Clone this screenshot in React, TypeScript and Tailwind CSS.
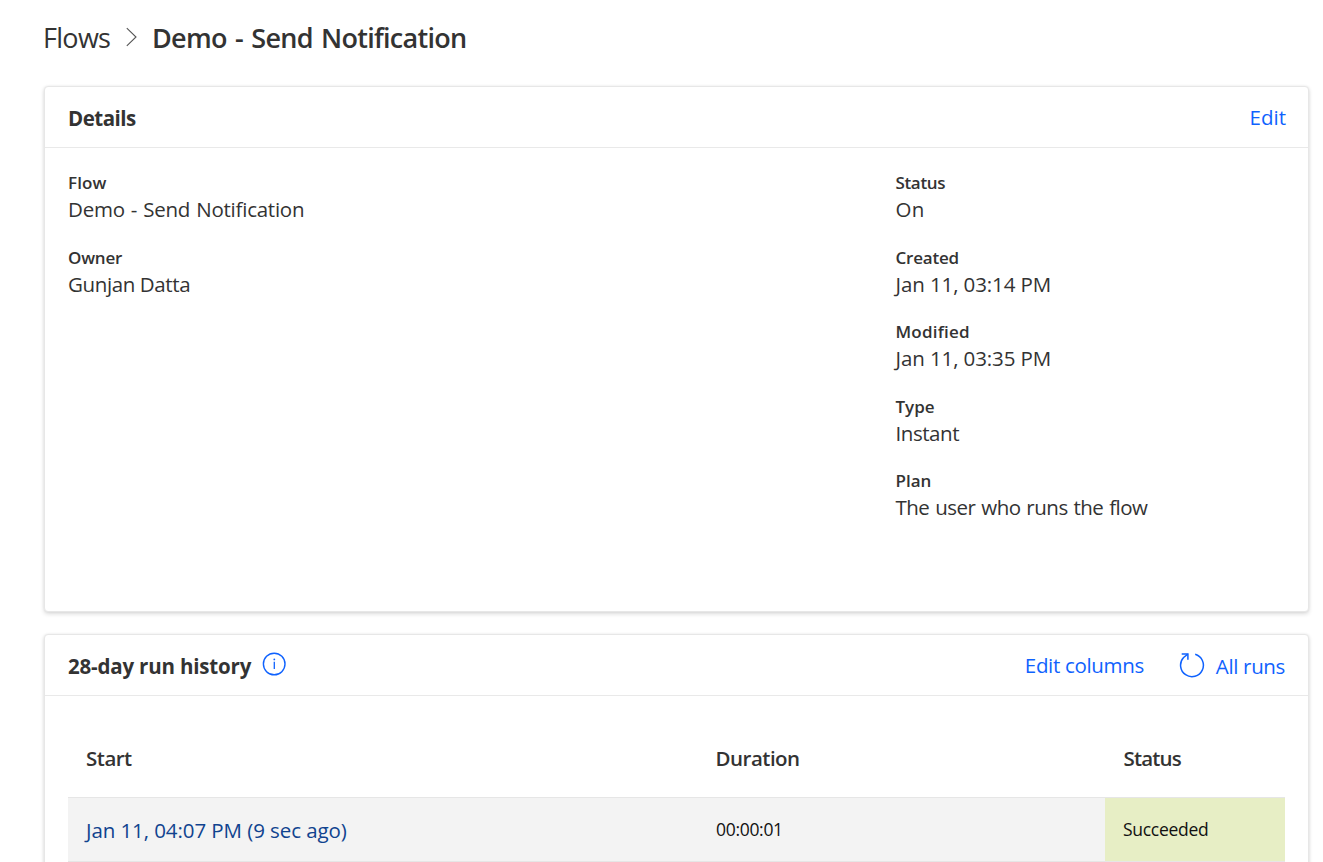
import React from "react";

type Item = { label: string; value: string; labelClass: string; valueClass: string; gap: string };

const summary: Item[] = [
  { label: "Flow", value: "Demo - Send Notification", labelClass: "tracking-[0.1px]", valueClass: "tracking-[-0.24px] [word-spacing:1px]", gap: "mb-[21px]" },
  { label: "Owner", value: "Gunjan Datta", labelClass: "tracking-[-0.2px]", valueClass: "tracking-[-0.38px]", gap: "" },
];

const properties: Item[] = [
  { label: "Status", value: "On", labelClass: "tracking-[-0.35px]", valueClass: "tracking-[0.3px]", gap: "mb-[21px]" },
  { label: "Created", value: "Jan 11, 03:14 PM", labelClass: "tracking-[-0.2px]", valueClass: "tracking-[-0.1px]", gap: "mb-5" },
  { label: "Modified", value: "Jan 11, 03:35 PM", labelClass: "tracking-[0.2px]", valueClass: "tracking-[-0.1px]", gap: "mb-[21px]" },
  { label: "Type", value: "Instant", labelClass: "", valueClass: "tracking-[-0.45px]", gap: "mb-5" },
  { label: "Plan", value: "The user who runs the flow", labelClass: "", valueClass: "tracking-[-0.5px] [word-spacing:1px]", gap: "" },
];

const card = "rounded-[4px] border border-[#e7e7e7] bg-white shadow-[0_2px_4px_rgba(0,0,0,0.14),0_0_3px_rgba(0,0,0,0.06)]";

function Field({ item }: { item: Item }) {
  return (
    <div className={item.gap}>
      <dt className={`pt-px text-[17px] leading-6 font-semibold ${item.labelClass}`}>{item.label}</dt>
      <dd className={`text-[20.5px] leading-7 ${item.valueClass}`}>{item.value}</dd>
      <div className="h-px" />
    </div>
  );
}

function Chevron() {
  return (
    <svg className="ml-[16px] h-5 w-[11px]" viewBox="0 0 11 20" fill="none" stroke="#555" strokeWidth="1.1">
      <path d="M0.8 1.2 L10 10 L0.8 18.8" />
    </svg>
  );
}

function InfoIcon() {
  return (
    <svg className="-mt-0.5 h-6 w-6" viewBox="0 0 24 24" fill="none" stroke="#0f62fe" strokeWidth="1.4">
      <circle cx="12.2" cy="12" r="10.8" />
      <path d="M12.3 9.8V17" strokeWidth="1.3" />
      <circle cx="12.3" cy="7.4" r="0.9" fill="#0f62fe" stroke="none" />
    </svg>
  );
}

function RefreshIcon() {
  return (
    <svg className="h-[26px] w-[26px]" viewBox="0 0 26 26" fill="none" stroke="#0f62fe" strokeWidth="1.5">
      <path d="M16.2 2.3A11.4 11.4 0 1 1 4.6 5.5L8.8 2.2" />
      <path d="M2.7 2H8.9V7.8" />
    </svg>
  );
}

export default function App() {
  return (
    <main className="h-[862px] overflow-hidden bg-white pl-11 pr-3.5 font-['Open_Sans','Noto_Sans',sans-serif] whitespace-nowrap text-[#333]">
      <nav className="flex h-[86px] items-start pt-[18px] text-[27px] leading-10">
        <div className="-ml-px w-[67px] tracking-[-0.7px]">Flows</div>
        <div className="flex h-[38px] items-center"><Chevron /></div>
        <h1 className="ml-[15px] font-semibold tracking-[-0.72px] [word-spacing:2px]">Demo - Send Notification</h1>
      </nav>

      <section className={`h-[526px] ${card}`}>
        <header className="flex h-[61px] items-center justify-between border-b border-[#e9e9e9] pr-[22px] pl-[23px] text-[20.5px] leading-[30px]">
          <h2 className="pt-0.5 font-bold tracking-[-0.5px]">Details</h2>
          <a className="text-[#0f62fe]">Edit</a>
        </header>
        <div className="flex pt-[22px] pl-[23px]">
          <dl className="w-[827.5px]">
            {summary.map((item) => <Field key={item.label} item={item} />)}
          </dl>
          <dl>
            {properties.map((item) => <Field key={item.label} item={item} />)}
          </dl>
        </div>
      </section>

      <section className={`mt-[22px] h-[260px] ${card}`}>
        <header className="flex h-[61px] items-center border-b border-[#e9e9e9] pr-[23px] pl-[23px] text-[20.5px] leading-[30px]">
          <h2 className="w-[194px] pt-0.5 font-bold tracking-[-0.18px]">28-day run history</h2>
          <InfoIcon />
          <div className="ml-auto flex items-center text-[#0f62fe]">
            <a className="mr-[35px] tracking-[-0.33px]">Edit columns</a>
            <RefreshIcon />
            <a className="ml-[11px] pt-0.5 tracking-[-0.35px]">All runs</a>
          </div>
        </header>
        <div className="mt-[30px] mr-[23px] ml-[23px]">
          <div className="grid h-[71px] grid-cols-[630px_407px_180px] pt-[17px] text-[20.5px] leading-[30px] font-semibold">
            <div className="pl-[18px] tracking-[-0.5px]">Start</div>
            <div className="pl-[17.5px] tracking-[-0.5px]">Duration</div>
            <div className="pl-[18.5px] tracking-[-0.85px]">Status</div>
          </div>
          <div className="grid h-[65px] grid-cols-[630px_407px_180px] border-y border-[#e6e6e6] bg-[#f3f3f3] text-[17.5px] leading-[62px] text-[#111]">
            <div className="pl-[18px] pt-px text-[20.5px] tracking-[-0.08px] text-[#10438f]">Jan 11, 04:07 PM (9 sec ago)</div>
            <div className="pl-[18px] tracking-[-0.3px]">00:00:01</div>
            <div className="bg-[#e7eec5] pl-[18px] tracking-[-0.28px]">Succeeded</div>
          </div>
        </div>
      </section>
    </main>
  );
}
